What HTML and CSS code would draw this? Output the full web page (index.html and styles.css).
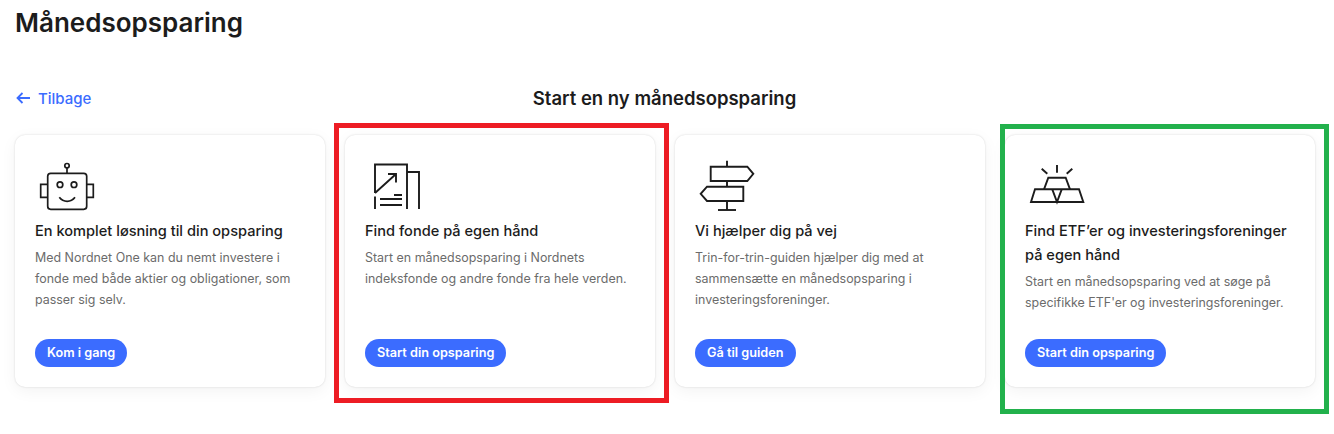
FILE: index.html
```html
<!DOCTYPE html>
<html lang="da">
<head>
<meta charset="UTF-8">
<meta name="viewport" content="width=device-width, initial-scale=1.0">
<title>Månedsopsparing</title>
<link rel="stylesheet" href="styles.css">
</head>
<body>

<h1 class="page-title">Månedsopsparing</h1>

<div class="subhead">
  <a class="back-link" href="#">
    <svg class="back-icon" width="14" height="12" viewBox="0 0 14 12" fill="none" stroke="currentColor" stroke-width="1.8">
      <path d="M14 6H1.500M6.500 1l-5 5 5 5"/>
    </svg>
    Tilbage
  </a>
  <h2 class="subhead-title">Start en ny månedsopsparing</h2>
</div>

<div class="cards">
  <div class="card">
    <svg class="card-icon" width="60" height="50" viewBox="0 0 60 50" fill="none" stroke="#1c1c1c" stroke-width="1.7">
      <rect x="12.700" y="10.300" width="39" height="36" rx="3"/>
      <path d="M12.700 21.300H5.700v13h7M51.700 21.300h6.600v13h-6.600"/>
      <path d="M32 10.300V5"/>
      <circle cx="32" cy="2.700" r="2.200"/>
      <circle cx="25" cy="21.700" r="2.800"/>
      <circle cx="39" cy="21.700" r="2.800"/>
      <path d="M24.300 34.300c4 5.400 11.700 5.400 15.700 0"/>
    </svg>
    <h3 class="card-title">En komplet løsning til din opsparing</h3>
    <p class="card-text">Med Nordnet One kan du nemt investere i fonde med både aktier og obligationer, som passer sig selv.</p>
    <a class="card-btn" href="#">Kom i gang</a>
  </div>

  <div class="card card-marked-red">
    <svg class="card-icon" width="60" height="50" viewBox="0 0 60 50" fill="none" stroke="#1c1c1c" stroke-width="1.900">
      <path d="M10 30V1.500h32V46M10 33.500V46"/>
      <path d="M42 9h12v37"/>
      <path d="M10 30L31 11M23 11h8v8.500"/>
      <path d="M29 32h8M15 36h22M15 42h22"/>
    </svg>
    <h3 class="card-title">Find fonde på egen hånd</h3>
    <p class="card-text">Start en månedsopsparing i Nordnets indeksfonde og andre fonde fra hele verden.</p>
    <a class="card-btn" href="#">Start din opsparing</a>
  </div>

  <div class="card">
    <svg class="card-icon" width="60" height="50" viewBox="0 0 60 50" fill="none" stroke="#1c1c1c" stroke-width="1.900">
      <path d="M32-2.300v6M32 18v5.700M32 38v9"/>
      <path d="M15.700 3.700h36.600l6 7.150-6 7.150H15.700z"/>
      <path d="M48.300 23.700H12l-6.300 7.150L12 38h36.300z"/>
      <path d="M23 47h18"/>
    </svg>
    <h3 class="card-title">Vi hjælper dig på vej</h3>
    <p class="card-text">Trin-for-trin-guiden hjælper dig med at sammensætte en månedsopsparing i investeringsforeninger.</p>
    <a class="card-btn" href="#">Gå til guiden</a>
  </div>

  <div class="card card-marked-green">
    <svg class="card-icon" width="60" height="50" viewBox="0 0 60 50" fill="none" stroke="#1c1c1c" stroke-width="1.900">
      <path d="M32 2v7.700M16.700 5.700l5.600 5M47.300 5.700l-5.600 5"/>
      <path d="M19 26.300l4.300-11.600h17.400L45 26.300"/>
      <path d="M6 39l4-12.700h44l4.300 12.700z"/>
      <path d="M27.300 26.300L32 39l4.700-12.700"/>
    </svg>
    <h3 class="card-title">Find ETF’er og investeringsforeninger på egen hånd</h3>
    <p class="card-text">Start en månedsopsparing ved at søge på specifikke ETF'er og investeringsforeninger.</p>
    <a class="card-btn" href="#">Start din opsparing</a>
  </div>
</div>

</body>
</html>
```

FILE: styles.css
```css
body {
  margin: 0;
  padding: 0 15px;
  height: 434px;
  overflow: hidden;
  background: #fff;
  color: #1c1c1c;
  font-family: Inter, "Liberation Sans", sans-serif;
}
.page-title {
  margin: 0;
  padding-top: 6px;
  font-size: 26px;
  line-height: 34px;
  font-weight: 600;
}
.subhead {
  display: grid;
  grid-template-columns: 1fr auto 1fr;
  align-items: center;
  margin-top: 43px;
  padding: 0 6px 0 1px;
  height: 30px;
}
.back-link {
  display: flex;
  align-items: center;
  gap: 8px;
  color: #3b6cff;
  font-size: 15px;
  font-weight: 500;
  text-decoration: none;
}
.subhead-title {
  margin: 0;
  grid-column: 2;
  font-size: 18.5px;
  font-weight: 600;
}
.cards {
  display: grid;
  grid-template-columns: repeat(4, 310px);
  gap: 20px;
  margin-top: 22px;
}
.card {
  position: relative;
  display: flex;
  flex-direction: column;
  align-items: flex-start;
  box-sizing: border-box;
  height: 252px;
  padding: 28px 20px 20px;
  background: #fff;
  border-radius: 10px;
  box-shadow: 0 0 2px rgba(0, 0, 0, 0.16), 0 4px 16px rgba(0, 0, 0, 0.05);
}
.card-icon {
  flex: none;
  margin-bottom: 6px;
  overflow: visible;
}
.card-title {
  margin: 0 0 4px;
  font-size: 14.6px;
  line-height: 24px;
  font-weight: 500;
}
.card-text {
  margin: 0;
  font-size: 12.45px;
  line-height: 21px;
  color: #6b6b6b;
}
.card-btn {
  margin-top: auto;
  padding: 0 12px;
  height: 28px;
  line-height: 28px;
  border-radius: 14px;
  background: #3b6cff;
  color: #fff;
  font-size: 12.7px;
  font-weight: 600;
  text-decoration: none;
}
.card-marked-red::after,
.card-marked-green::after {
  content: "";
  position: absolute;
  border: 5px solid;
  pointer-events: none;
}
.card-marked-red::after {
  inset: -12px -14px -16px -11px;
  border-color: #ed1c24;
}
.card-marked-green::after {
  inset: -11px -14px -27px -5px;
  border-color: #22b14c;
}
```
